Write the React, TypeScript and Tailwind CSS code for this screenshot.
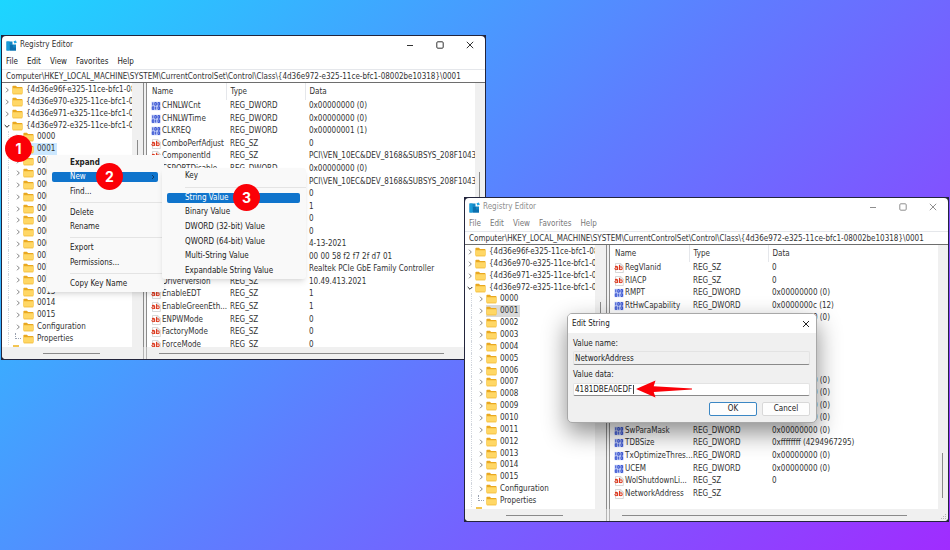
import { ReactNode } from "react";
import clsx from "clsx";

type RegType = "REG_SZ" | "REG_DWORD" | "REG_BINARY";

type RegValue = {
  name: string;
  type: RegType;
  data: string;
};

const REG_PATH =
  "Computer\\HKEY_LOCAL_MACHINE\\SYSTEM\\CurrentControlSet\\Control\\Class\\{4d36e972-e325-11ce-bfc1-08002be10318}\\0001";

const classKeys = [
  "{4d36e96f-e325-11ce-bfc1-08",
  "{4d36e970-e325-11ce-bfc1-08",
  "{4d36e971-e325-11ce-bfc1-08",
  "{4d36e972-e325-11ce-bfc1-08",
];

const subKeys = [
  "0000",
  "0001",
  "0002",
  "0003",
  "0004",
  "0005",
  "0006",
  "0007",
  "0008",
  "0009",
  "0010",
  "0011",
  "0012",
  "0013",
  "0014",
  "0015",
  "Configuration",
  "Properties",
];

const firstValues: RegValue[] = [
  { name: "CHNLWCnt", type: "REG_DWORD", data: "0x00000000 (0)" },
  { name: "CHNLWTime", type: "REG_DWORD", data: "0x00000000 (0)" },
  { name: "CLKREQ", type: "REG_DWORD", data: "0x00000001 (1)" },
  { name: "ComboPerfAdjust", type: "REG_SZ", data: "0" },
  {
    name: "ComponentId",
    type: "REG_SZ",
    data: "PCI\\VEN_10EC&DEV_8168&SUBSYS_208F1043&",
  },
  { name: "CSPORTDisable", type: "REG_DWORD", data: "0x00000000 (0)" },
  {
    name: "",
    type: "REG_SZ",
    data: "PCI\\VEN_10EC&DEV_8168&SUBSYS_208F1043&",
  },
  { name: "", type: "REG_SZ", data: "0" },
  { name: "", type: "REG_SZ", data: "1" },
  { name: "", type: "REG_SZ", data: "0" },
  { name: "", type: "REG_SZ", data: "0" },
  { name: "", type: "REG_SZ", data: "4-13-2021" },
  { name: "", type: "REG_BINARY", data: "00 00 58 f2 f7 2f d7 01" },
  { name: "", type: "REG_SZ", data: "Realtek PCIe GbE Family Controller" },
  { name: "DriverVersion", type: "REG_SZ", data: "10.49.413.2021" },
  { name: "EnableEDT", type: "REG_SZ", data: "1" },
  { name: "EnableGreenEth...", type: "REG_SZ", data: "1" },
  { name: "ENPWMode", type: "REG_SZ", data: "0" },
  { name: "FactoryMode", type: "REG_SZ", data: "0" },
  { name: "ForceMode", type: "REG_SZ", data: "0" },
];

const secondValues: RegValue[] = [
  { name: "RegVlanid", type: "REG_SZ", data: "0" },
  { name: "RIACP", type: "REG_SZ", data: "0" },
  { name: "RMPT", type: "REG_DWORD", data: "0x00000000 (0)" },
  { name: "RtHwCapability", type: "REG_DWORD", data: "0x0000000c (12)" },
  { name: "", type: "REG_DWORD", data: "0x00000000 (0)" },
  { name: "", type: "REG_SZ", data: "" },
  { name: "", type: "REG_SZ", data: "" },
  { name: "", type: "REG_SZ", data: "" },
  { name: "", type: "REG_SZ", data: "" },
  { name: "", type: "REG_DWORD", data: "0x00000000 (0)" },
  { name: "", type: "REG_DWORD", data: "0x00000000 (0)" },
  { name: "", type: "REG_DWORD", data: "0x00000000 (0)" },
  { name: "", type: "REG_DWORD", data: "0x00000000 (0)" },
  { name: "SwParaMask", type: "REG_DWORD", data: "0x00000000 (0)" },
  { name: "TDBSize", type: "REG_DWORD", data: "0xffffffff (4294967295)" },
  { name: "TxOptimizeThres...", type: "REG_DWORD", data: "0x00000000 (0)" },
  { name: "UCEM", type: "REG_DWORD", data: "0x00000000 (0)" },
  { name: "WolShutdownLi...", type: "REG_SZ", data: "0" },
  { name: "NetworkAddress", type: "REG_SZ", data: "" },
];

function AppIcon() {
  return (
    <svg viewBox="0 0 11 11" className="size-[11px] shrink-0" aria-hidden="true">
      <path d="M0.5 1.5h6v3h3.5v6h-9.5z" fill="#1286c4" />
      <path d="M0.5 1.5h3v9h-3z" fill="#1a9bd8" />
      <path d="M4 5h3v2.5h3v3H4z" fill="#0c6fae" />
      <path d="M7.5 1.2l2.4-.8.9 2.3-2.4.9z" fill="#22a7e5" />
    </svg>
  );
}

function FolderIcon() {
  return (
    <svg viewBox="0 0 11 10" className="h-[10px] w-[11px] shrink-0" aria-hidden="true">
      <path d="M0.4 1.6q0-.8.8-.8h2.7l1.2 1.1h4.6q.8 0 .8.8v5.6H.4z" fill="#e9a820" />
      <path d="M0.4 3.2h10.1v5.2q0 .8-.8.8H1.2q-.8 0-.8-.8z" fill="#ffd765" />
      <path d="M0.8 8.9h9.4" stroke="#f0b93a" strokeWidth=".7" />
    </svg>
  );
}

function ValueIcon({ type }: { type: RegType }) {
  if (type === "REG_SZ") {
    return (
      <svg viewBox="0 0 10 10" className="size-[10px] shrink-0" aria-hidden="true">
        <path d="M1.5.5h5.2L9.3 3v6.5H1.5z" fill="#fff" stroke="#bdbdbd" strokeWidth=".6" />
        <path d="M6.7.5V3h2.6" fill="none" stroke="#bdbdbd" strokeWidth=".6" />
        <path d="M1 3.6q2.6-.8 2.6 1v2.3" fill="none" stroke="#dd3c22" strokeWidth="1.1" />
        <ellipse cx="2.1" cy="5.7" rx="1.3" ry="1" fill="none" stroke="#dd3c22" strokeWidth="1" />
        <path d="M5.5 1.8V7" stroke="#dd3c22" strokeWidth="1.1" />
        <ellipse cx="6.9" cy="5.2" rx="1.3" ry="1.5" fill="none" stroke="#dd3c22" strokeWidth="1.1" />
      </svg>
    );
  }
  return (
    <svg viewBox="0 0 10 10" className="size-[10px] shrink-0" aria-hidden="true">
      <path d="M.5.8h9v8.4h-9z" fill="#c3cef8" />
      <path
        d="M1.8 1.4v3M3.8 1.6h1.5v2.6H3.8zM7 1.6h1.6v2.6H7zM1.3 5.8h1.5v2.6H1.3zM4.7 5.6v3M7 5.8h1.6v2.6H7z"
        fill="none"
        stroke="#3450cf"
        strokeWidth="1"
      />
    </svg>
  );
}

function Chevron({ open }: { open?: boolean }) {
  return (
    <svg viewBox="0 0 6 6" className="size-[6px] shrink-0" aria-hidden="true">
      <path
        d={open ? "M.7 2l2.3 2.3L5.3 2" : "M2 .7l2.3 2.3L2 5.3"}
        fill="none"
        stroke={open ? "#222" : "#808080"}
        strokeWidth="1"
      />
    </svg>
  );
}

function WindowControls() {
  return (
    <div className="flex items-center">
      <button aria-label="Minimize" className="flex w-[30px] justify-center">
        <svg viewBox="0 0 8 8" className="size-[8px]" fill="none" stroke="currentColor">
          <path d="M1 4.5h6" />
        </svg>
      </button>
      <button aria-label="Maximize" className="flex w-[30px] justify-center">
        <svg viewBox="0 0 8 8" className="size-[8px]" fill="none" stroke="currentColor">
          <rect x=".8" y=".8" width="6.4" height="6.4" rx="1" />
        </svg>
      </button>
      <button aria-label="Close" className="flex w-[30px] justify-center">
        <svg viewBox="0 0 8 8" className="size-[8px]" fill="none" stroke="currentColor">
          <path d="M.8.8l6.4 6.4M7.2.8L.8 7.2" />
        </svg>
      </button>
    </div>
  );
}

function KeyTree({ active }: { active: boolean }) {
  return (
    <div className="w-[130px] shrink-0 overflow-hidden bg-white pt-px">
      <ul className="flex h-[261px] flex-col">
        {classKeys.map((key, i) => (
          <li key={key} className="flex min-h-0 flex-1 items-center pl-[2px] whitespace-nowrap">
            <Chevron open={i === 3} />
            <span className="ml-[2px] flex items-center gap-[3px]">
              <FolderIcon />
              {key}
            </span>
          </li>
        ))}
        {subKeys.map((key) => (
          <li
            key={key}
            className="ml-[6px] flex min-h-0 flex-1 items-center border-l border-dotted border-gray-300 pl-[6px] whitespace-nowrap"
          >
            {key === "Properties" ? (
              <span className="mb-[5px] h-[6px] w-[6px] border-b border-l border-dotted border-gray-400" />
            ) : (
              <Chevron />
            )}
            <span
              className={clsx(
                "ml-[2px] flex h-[12px] items-center gap-[3px] pr-[2px]",
                key === "0001" && (active ? "bg-[#cce8ff]" : "bg-[#d9d9d9]"),
              )}
            >
              <FolderIcon />
              {key}
            </span>
          </li>
        ))}
      </ul>
      <div className="ml-[11px] h-[2px] w-[6px] bg-[#f3c552]" />
    </div>
  );
}

function ValueTable({ values, className }: { values: RegValue[]; className: string }) {
  return (
    <table className={clsx("w-full table-fixed border-collapse text-left whitespace-nowrap", className)}>
      <thead>
        <tr className="h-[17px]">
          <th className="w-[79px] border-r border-gray-200 p-0 pl-[5px] font-normal">Name</th>
          <th className="w-[79px] border-r border-gray-200 p-0 pl-[4px] font-normal">Type</th>
          <th className="p-0 pl-[4px] font-normal">Data</th>
        </tr>
      </thead>
      <tbody>
        {values.map((value, i) => (
          <tr key={i}>
            <td className="p-0 pl-[4px]">
              <span className="flex items-center gap-px">
                <ValueIcon type={value.type} />
                {value.name}
              </span>
            </td>
            <td className="p-0 pl-[4px]">{value.type}</td>
            <td className="p-0 pl-[4px]">{value.data}</td>
          </tr>
        ))}
      </tbody>
    </table>
  );
}

function RegistryWindow({
  active,
  values,
  tableClass,
  thumbClass,
  className,
  children,
}: {
  active: boolean;
  values: RegValue[];
  tableClass: string;
  thumbClass: string;
  className: string;
  children?: ReactNode;
}) {
  return (
    <section className={clsx("absolute w-[485px] bg-[#23253c] p-px", className)}>
      <div className="overflow-hidden rounded-[4px] bg-white">
        <header
          className={clsx(
            "flex h-[18px] items-center gap-[3px] pl-[4px]",
            active ? "text-[#333333]" : "text-[#8f8f8f]",
          )}
        >
          <AppIcon />
          <h1 className="flex-1">Registry Editor</h1>
          <WindowControls />
        </header>
        <nav
          className={clsx(
            "flex h-[15px] items-center gap-[9px] pl-[4px]",
            active ? "text-[#222222]" : "text-[#777777]",
          )}
        >
          <button>File</button>
          <button>Edit</button>
          <button>View</button>
          <button>Favorites</button>
          <button>Help</button>
        </nav>
        <input
          aria-label="Address"
          defaultValue={REG_PATH}
          className="block h-[14px] w-full border-t border-b border-t-gray-200 border-b-[#6e6e6e] px-[4px] outline-none"
        />
        <div className="flex h-[264px] overflow-hidden">
          <KeyTree active={active} />
          <div className="w-[11px] shrink-0 bg-[#f0f0f0] pt-[57px] pl-[5px]">
            <div className="h-[24px] w-px bg-[#8a8a8a]" />
          </div>
          <div className="w-[4px] shrink-0 border-x border-[#8c8c8c] bg-[#f0f0f0]" />
          <div className="min-w-0 flex-1 overflow-hidden">
            <ValueTable values={values} className={tableClass} />
          </div>
          <div className={clsx("w-[10px] shrink-0 bg-[#f0f0f0] pl-[4px]", thumbClass)}>
            <div className="h-[45px] w-px bg-[#8a8a8a]" />
          </div>
        </div>
        <div className="flex h-[12px] items-center bg-[#f0f0f0]">
          <div className="flex w-[141px] shrink-0 pl-[41px]">
            <div className="h-px w-[57px] bg-[#8a8a8a]" />
          </div>
          <div className="h-full w-[4px] shrink-0 border-x border-[#b5b5b5]" />
          <div className="flex-1 pr-[33px] pl-[12px]">
            <div className="h-px bg-[#8a8a8a]" />
          </div>
          <svg viewBox="0 0 8 8" className="size-[8px] self-end" fill="#b5b5b5" aria-hidden="true">
            <path d="M5 1h1v1H5zM5 3h1v1H5zM3 3h1v1H3zM5 5h1v1H5zM3 5h1v1H3zM1 5h1v1H1z" />
          </svg>
        </div>
      </div>
      {children}
    </section>
  );
}

function MenuItem({
  children,
  selected,
  bold,
  submenu,
}: {
  children: ReactNode;
  selected?: boolean;
  bold?: boolean;
  submenu?: boolean;
}) {
  return (
    <button
      role="menuitem"
      className={clsx(
        "flex min-h-[14px] flex-1 items-center pr-[6px] pl-[5px] text-left text-[#222222]",
        bold && "font-bold",
      )}
    >
      <span
        className={clsx(
          "flex h-[10px] flex-1 items-center justify-between rounded-[2px] pr-[3px] pl-[18px]",
          selected && "bg-[#0f74cc] text-white",
        )}
      >
        {children}
        {submenu && (
          <svg viewBox="0 0 4 6" className="h-[6px] w-[4px]" fill="none" stroke="#0b3d6e" aria-hidden="true">
            <path d="M1 1l2 2-2 2" />
          </svg>
        )}
      </span>
    </button>
  );
}

function MenuDivider() {
  return (
    <div className="flex h-[7px] items-center pl-[23px]">
      <div className="h-px flex-1 bg-[#e4e4e4]" />
    </div>
  );
}

function StepBadge({ step, className }: { step: number; className: string }) {
  return (
    <span
      className={clsx(
        "absolute flex size-[27px] items-center justify-center rounded-full bg-[#fb0007] font-['Inter',sans-serif] text-[14px] font-bold text-white",
        className,
      )}
    >
      {step}
    </span>
  );
}

function ContextMenus() {
  return (
    <>
      <div
        role="menu"
        className="absolute top-[120px] left-[46px] flex h-[137px] w-[117px] flex-col rounded-[3px] bg-[#f9f9f9] py-[1px] shadow-md"
      >
        <MenuItem bold>Expand</MenuItem>
        <MenuItem selected submenu>
          New
        </MenuItem>
        <MenuItem>Find...</MenuItem>
        <MenuDivider />
        <MenuItem>Delete</MenuItem>
        <MenuItem>Rename</MenuItem>
        <MenuDivider />
        <MenuItem>Export</MenuItem>
        <MenuItem>Permissions...</MenuItem>
        <MenuDivider />
        <MenuItem>Copy Key Name</MenuItem>
      </div>
      <div
        role="menu"
        className="absolute top-[133px] left-[161px] flex h-[111px] w-[144px] flex-col rounded-[3px] bg-[#f9f9f9] py-[1px] shadow-md"
      >
        <MenuItem>Key</MenuItem>
        <MenuDivider />
        <MenuItem selected>String Value</MenuItem>
        <MenuItem>Binary Value</MenuItem>
        <MenuItem>DWORD (32-bit) Value</MenuItem>
        <MenuItem>QWORD (64-bit) Value</MenuItem>
        <MenuItem>Multi-String Value</MenuItem>
        <MenuItem>Expandable String Value</MenuItem>
      </div>
      <StepBadge step={1} className="top-[100px] left-[4px]" />
      <StepBadge step={2} className="top-[128px] left-[95px]" />
      <StepBadge step={3} className="top-[149px] left-[232px]" />
    </>
  );
}

function EditStringDialog() {
  return (
    <form
      role="dialog"
      aria-label="Edit String"
      className="absolute top-[116px] left-[103px] w-[250px] overflow-hidden rounded-[5px] border border-[#a8a8a8] bg-[#f0f0f0] text-[#222222] shadow-[0_10px_24px_rgba(0,0,0,0.45)]"
    >
      <div className="flex h-[19px] items-center justify-between bg-white pl-[4px]">
        <h2>Edit String</h2>
        <button type="button" aria-label="Close" className="flex w-[20px] justify-center">
          <svg viewBox="0 0 8 8" className="size-[8px]" fill="none" stroke="#222">
            <path d="M1 1l6 6M7 1L1 7" />
          </svg>
        </button>
      </div>
      <div className="flex flex-col pt-[5px] pr-[6px] pb-[6px] pl-[5px]">
        <label htmlFor="value-name">Value name:</label>
        <input
          id="value-name"
          readOnly
          value="NetworkAddress"
          className="mt-px h-[14px] rounded-[2px] border border-[#e3e3e3] border-b-[#8a8a8a] px-px outline-none"
        />
        <label htmlFor="value-data" className="mt-[4px]">
          Value data:
        </label>
        <div className="relative mt-[2px] flex">
          <input
            id="value-data"
            defaultValue="4181DBEA0EDF"
            className="h-[13px] flex-1 rounded-[2px] border border-[#e3e3e3] border-b-[#8a8a8a] bg-white px-px outline-none"
          />
          <span className="absolute top-[2px] left-[60px] h-[9px] w-px bg-[#444444]" />
          <svg viewBox="0 0 56 18" className="absolute -top-[3px] left-[63px] h-[18px] w-[56px]" aria-hidden="true">
            <path d="M0 9L19.5 0.5l-1.8 5.7L56 8.6v1L17.7 12l1.8 5.5z" fill="#fb0007" />
          </svg>
        </div>
        <div className="mt-[6px] flex justify-end gap-[5px]">
          <button
            type="button"
            className="h-[14px] w-[48px] rounded-[2px] border border-[#3b87c4] bg-[#fdfdfd] leading-[12px]"
          >
            OK
          </button>
          <button
            type="button"
            className="h-[14px] w-[48px] rounded-[2px] border border-[#d8d8d8] bg-[#fdfdfd] leading-[12px]"
          >
            Cancel
          </button>
        </div>
      </div>
    </form>
  );
}

export default function App() {
  return (
    <main className="relative min-h-screen w-full overflow-hidden bg-[linear-gradient(135deg,#1cd6ff_0%,#5f7cff_50%,#a02cff_100%)] font-['DejaVu_Sans_Condensed','Open_Sans',sans-serif] text-[8px] leading-[12px] text-[#333333]">
      <RegistryWindow
        active
        values={firstValues}
        tableClass="h-[268px]"
        thumbClass="pt-[89px]"
        className="top-[35px] left-px"
      >
        <ContextMenus />
      </RegistryWindow>
      <RegistryWindow
        active={false}
        values={secondValues}
        tableClass="h-[255px]"
        thumbClass="pt-[208px]"
        className="top-[197px] left-[464px]"
      >
        <EditStringDialog />
      </RegistryWindow>
    </main>
  );
}
